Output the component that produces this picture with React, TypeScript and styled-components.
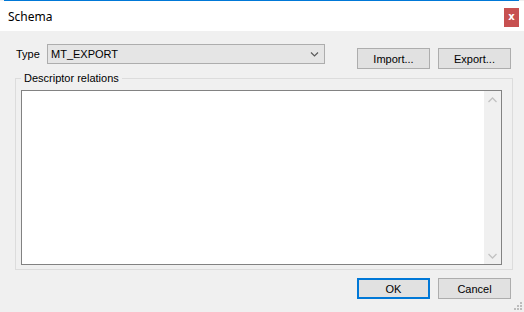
import React from 'react';
import styled, { createGlobalStyle } from 'styled-components';

const Global = createGlobalStyle`
  html, body { margin: 0; padding: 0; background: #f0f0f0; }
  body {
    width: 524px; height: 312px; overflow: hidden;
    font-family: "Liberation Sans", Arial, sans-serif;
    font-size: 11px; color: #000;
  }
  * { box-sizing: border-box; }
`;

const Window = styled.div`
  position: relative;
  width: 524px;
  height: 312px;
  display: flex;
  flex-direction: column;
  background: #f0f0f0;
`;

const AccentLine = styled.div`
  height: 1px;
  margin: 0 5px 0 4px;
  background: #0078d7;
`;

const TitleBar = styled.div`
  height: 30px;
  background: #fff;
  display: flex;
  align-items: center;
  justify-content: space-between;
  padding: 0 5px 0 8px;
`;

const Title = styled.span`
  font-family: "Noto Sans", "Open Sans", sans-serif;
  font-size: 12px;
  color: #000;
`;

const CloseButton = styled.div`
  align-self: flex-start;
  margin-top: 7px;
  width: 15px;
  height: 19px;
  background: #c75050;
  color: #fff;
  font-family: "DejaVu Sans", sans-serif;
  font-weight: bold;
  font-size: 10px;
  line-height: 18px;
  text-align: center;
`;

const Content = styled.div`
  display: flex;
  flex-direction: column;
  padding: 13px 0 0 15px;
`;

const TopRow = styled.div`
  display: flex;
  align-items: flex-start;
  height: 25px;
`;

const Label = styled.span`
  width: 32px;
  padding-left: 1px;
  line-height: 20px;
`;

const Combo = styled.div`
  width: 278px;
  height: 20px;
  margin-right: 32px;
  background: #e5e5e5;
  border: 1px solid #adadad;
  display: flex;
  align-items: center;
  justify-content: space-between;
  padding: 0 5px 0 3px;
`;

const Button = styled.div<{ $default?: boolean }>`
  width: 73px;
  height: 21px;
  background: #e1e1e1;
  border: ${p => (p.$default ? '2px solid #0078d7' : '1px solid #adadad')};
  display: flex;
  align-items: center;
  justify-content: center;
`;

const TopButtons = styled.div`
  display: flex;
  gap: 8px;
  margin-top: 4px;
`;

const Group = styled.fieldset`
  margin: 3px 0 0 0;
  width: 498px;
  border: 1px solid #dcdcdc;
  padding: 5px 10px 4px 5px;
  min-width: 0;
`;

const Legend = styled.legend`
  padding: 0 3px;
  line-height: 13px;
  font-size: 11px;
`;

const List = styled.div`
  width: 481px;
  height: 175px;
  border: 1px solid #828282;
  background: #fff;
  display: flex;
  justify-content: flex-end;
`;

const ScrollBar = styled.div`
  width: 17px;
  background: #f0f0f0;
  display: flex;
  flex-direction: column;
  justify-content: space-between;
`;

const ScrollArrow = styled.div`
  width: 17px;
  height: 17px;
  display: flex;
  align-items: center;
  justify-content: center;
`;

const BottomRow = styled.div`
  display: flex;
  justify-content: flex-end;
  gap: 8px;
  margin-top: 8px;
  padding-right: 13px;
`;

const Grip = styled.svg`
  position: absolute;
  right: 1px;
  bottom: 1px;
`;

const Chevron = ({ up, color }: { up?: boolean; color: string }) => (
  <svg width="9" height="6" viewBox="0 0 9 6">
    <path
      d={up ? 'M0.5 5 L4.5 1 L8.5 5' : 'M0.5 1 L4.5 5 L8.5 1'}
      fill="none"
      stroke={color}
      strokeWidth="1.3"
    />
  </svg>
);

export default function App() {
  return (
    <>
      <Global />
      <Window>
        <AccentLine />
        <TitleBar>
          <Title>Schema</Title>
          <CloseButton>x</CloseButton>
        </TitleBar>
        <Content>
          <TopRow>
            <Label>Type</Label>
            <Combo>
              <span>MT_EXPORT</span>
              <svg width="9" height="5" viewBox="0 0 9 5">
                <path d="M1 0.5 L4.5 4 L8 0.5" fill="none" stroke="#5a5a5a" strokeWidth="1.2" />
              </svg>
            </Combo>
            <TopButtons>
              <Button>Import...</Button>
              <Button>Export...</Button>
            </TopButtons>
          </TopRow>
          <Group>
            <Legend>Descriptor relations</Legend>
            <List>
              <ScrollBar>
                <ScrollArrow>
                  <Chevron up color="#c2c2c2" />
                </ScrollArrow>
                <ScrollArrow>
                  <Chevron color="#c2c2c2" />
                </ScrollArrow>
              </ScrollBar>
            </List>
          </Group>
          <BottomRow>
            <Button $default>OK</Button>
            <Button>Cancel</Button>
          </BottomRow>
        </Content>
        <Grip width="10" height="10" viewBox="0 0 10 10">
          <g fill="#bcbcbc">
            <rect x="7" y="1" width="2" height="2" />
            <rect x="4" y="4" width="2" height="2" />
            <rect x="7" y="4" width="2" height="2" />
            <rect x="1" y="7" width="2" height="2" />
            <rect x="4" y="7" width="2" height="2" />
            <rect x="7" y="7" width="2" height="2" />
          </g>
        </Grip>
      </Window>
    </>
  );
}
